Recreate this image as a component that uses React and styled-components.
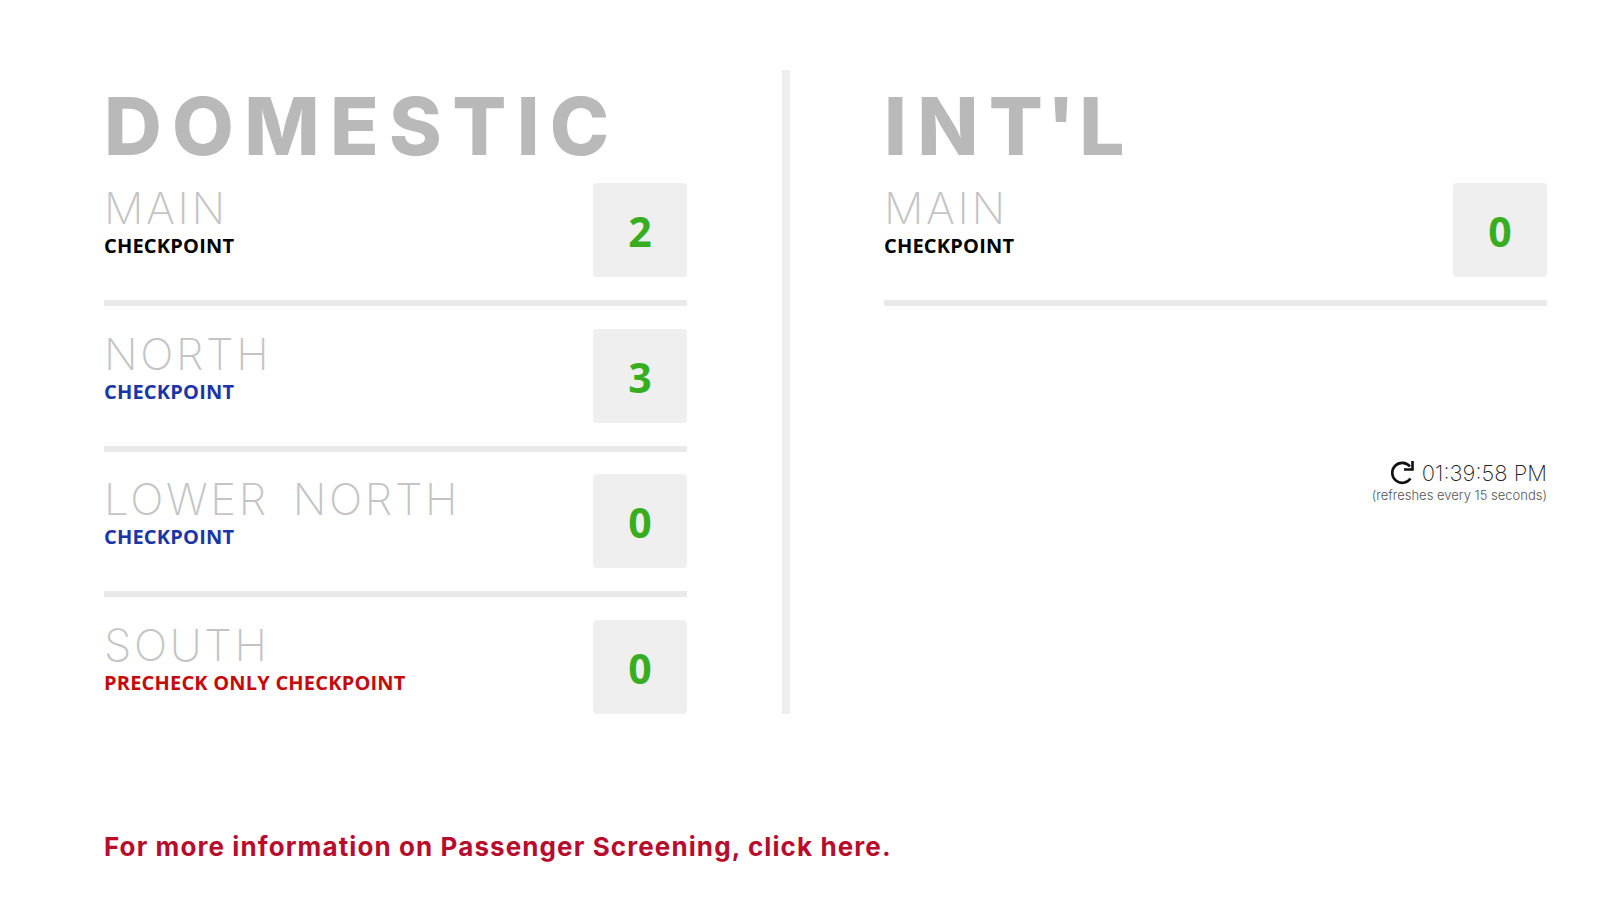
import React from 'react';
import styled, { createGlobalStyle } from 'styled-components';

const GlobalStyle = createGlobalStyle`
  html, body {
    margin: 0;
    padding: 0;
    background: #ffffff;
  }
`;

const Page = styled.div`
  width: 1600px;
  height: 918px;
  box-sizing: border-box;
  padding: 70px 53px 0 104px;
  overflow: hidden;
`;

const Columns = styled.div`
  display: flex;
  align-items: flex-start;
`;

const Column = styled.section`
  width: ${(p) => p.$width}px;
  flex: none;
`;

const Divider = styled.div`
  width: 8px;
  height: 644px;
  margin: 0 94px 0 95px;
  background: #eeeeee;
  flex: none;
`;

const Heading = styled.h1`
  margin: 0;
  height: 113px;
  padding-top: 13px;
  box-sizing: border-box;
  font-family: Inter, sans-serif;
  font-weight: 800;
  font-size: 80px;
  line-height: 86px;
  letter-spacing: 10.3px;
  color: #b9b9b9;
  white-space: nowrap;
`;

const Tick = styled.span`
  letter-spacing: 4px;
`;

const Row = styled.div`
  display: flex;
  justify-content: space-between;
  align-items: flex-start;
  height: 94px;
`;

const Rule = styled.div`
  height: 6px;
  margin: 23px 0 22.67px;
  background: #e9e9e9;
`;

const Name = styled.div`
  font-family: Inter, sans-serif;
  font-weight: 200;
  font-size: 44px;
  line-height: 51px;
  letter-spacing: 2.6px;
  word-spacing: 9px;
  color: #c4c4c4;
  white-space: nowrap;
`;

const Kind = styled.div`
  font-family: "Open Sans", sans-serif;
  font-weight: 700;
  font-size: 20px;
  line-height: 24px;
  letter-spacing: 0.2px;
  color: ${(p) => p.$color};
  white-space: nowrap;
`;

const CountBox = styled.div`
  width: 94px;
  height: 94px;
  box-sizing: border-box;
  padding-top: 2px;
  border-radius: 4px;
  background: #efefef;
  display: flex;
  align-items: center;
  justify-content: center;
  font-family: "Open Sans", sans-serif;
  font-weight: 700;
  font-size: 41px;
  color: #37ae20;
`;

const Refresh = styled.div`
  margin-top: 153px;
  display: flex;
  flex-direction: column;
  align-items: flex-end;
`;

const Clock = styled.div`
  display: flex;
  align-items: center;
  gap: 6px;
  font-family: Inter, sans-serif;
  font-weight: 200;
  font-size: 22px;
  line-height: 28px;
  color: #222222;
`;

const Note = styled.div`
  font-family: Inter, sans-serif;
  font-weight: 300;
  font-size: 13px;
  line-height: 16px;
  color: #555555;
`;

const MoreInfo = styled.a`
  display: block;
  margin-top: 117px;
  font-family: Inter, sans-serif;
  font-weight: 700;
  font-size: 26px;
  line-height: 32px;
  letter-spacing: 1.1px;
  color: #b80c2c;
  text-decoration: none;
  white-space: nowrap;
`;

const BLACK = '#000000';
const BLUE = '#1a36a8';
const RED = '#c40a0a';

const domestic = [
  { name: 'MAIN', kind: 'CHECKPOINT', color: BLACK, count: 2 },
  { name: 'NORTH', kind: 'CHECKPOINT', color: BLUE, count: 3 },
  { name: 'LOWER NORTH', kind: 'CHECKPOINT', color: BLUE, count: 0 },
  { name: 'SOUTH', kind: 'PRECHECK ONLY CHECKPOINT', color: RED, count: 0 },
];

const RefreshIcon = () => (
  <svg width="26" height="26" viewBox="0 0 26 26" fill="none" stroke="#111111" strokeWidth="2.6">
    <path d="M20.5 18.5A10 10 0 1 1 20 6.5" />
    <path d="M22.5 1v8.5H14" />
  </svg>
);

const Checkpoint = ({ name, kind, color, count }) => (
  <Row>
    <div>
      <Name>{name}</Name>
      <Kind $color={color}>{kind}</Kind>
    </div>
    <CountBox>{count}</CountBox>
  </Row>
);

export default function App() {
  return (
    <Page>
      <GlobalStyle />
      <Columns>
        <Column $width={583}>
          <Heading>DOMESTIC</Heading>
          {domestic.map((c, i) => (
            <React.Fragment key={c.name}>
              {i > 0 && <Rule />}
              <Checkpoint {...c} />
            </React.Fragment>
          ))}
        </Column>
        <Divider />
        <Column $width={663}>
          <Heading>IN<Tick>T'</Tick>L</Heading>
          <Checkpoint name="MAIN" kind="CHECKPOINT" color={BLACK} count={0} />
          <Rule />
          <Refresh>
            <Clock>
              <RefreshIcon />
              01:39:58 PM
            </Clock>
            <Note>(refreshes every 15 seconds)</Note>
          </Refresh>
        </Column>
      </Columns>
      <MoreInfo href="#">For more information on Passenger Screening, click here.</MoreInfo>
    </Page>
  );
}
